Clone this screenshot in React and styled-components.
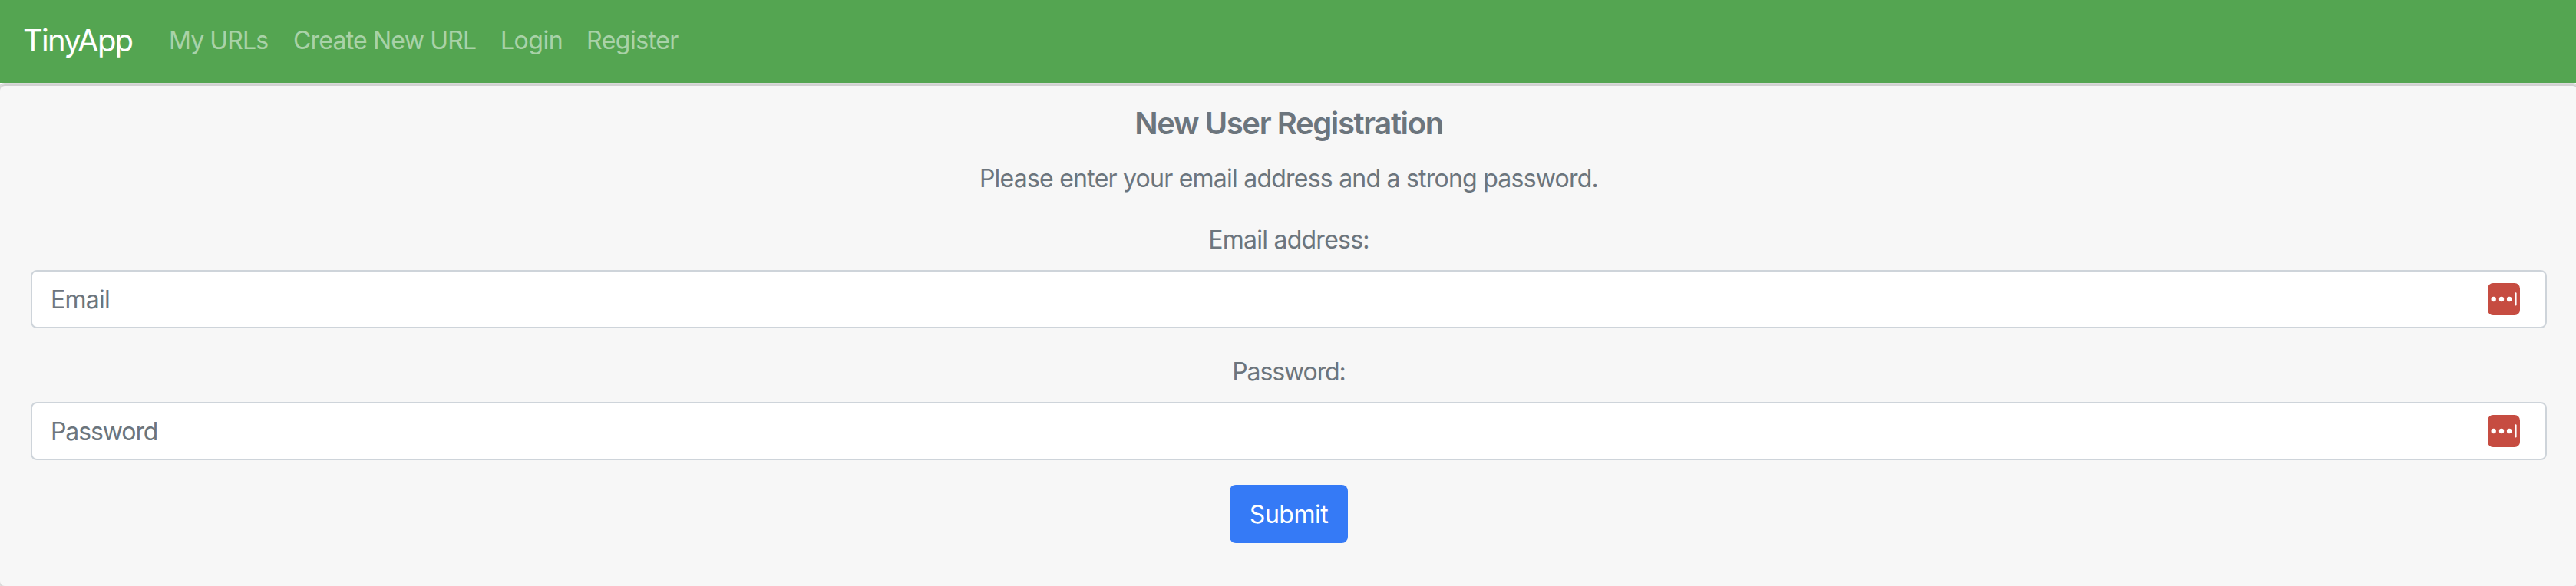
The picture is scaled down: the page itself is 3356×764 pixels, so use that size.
import React from 'react';
import styled, { createGlobalStyle } from 'styled-components';

const GlobalStyle = createGlobalStyle`
  *, *::before, *::after { box-sizing: border-box; }
  body {
    margin: 0;
    background: #fff;
    color: #6c757d;
    font-family: Inter, "Liberation Sans", sans-serif;
    font-size: 32px;
    line-height: 48px;
    overflow: hidden;
  }
`;

const Page = styled.div`
  height: 764px;
  display: flex;
  flex-direction: column;
  overflow: hidden;
`;

const Navbar = styled.nav`
  flex: none;
  height: 108px;
  padding: 0 30px 2px;
  display: flex;
  align-items: center;
  background: #54a551;
  white-space: nowrap;
`;

const Brand = styled.a`
  width: 174px;
  color: #fff;
  font-size: 40px;
  letter-spacing: -1.8px;
`;

const NavLink = styled.a`
  width: ${(p) => p.$width}px;
  padding-left: 16px;
  color: rgba(255, 255, 255, 0.5);
  letter-spacing: ${(p) => p.$tracking}px;
`;

const Card = styled.main`
  flex: 1;
  margin: 0 -4px -2px -2px;
  padding: 25px 40px 0;
  border: 2px solid #dadada;
  border-radius: 8px;
  background: #f7f7f7;
  box-shadow: inset 0 2px 0 #d2d2d2;
  text-align: center;
`;

const Title = styled.h5`
  margin: 2px 0 24px;
  font-size: 40px;
  line-height: 48px;
  font-weight: 600;
  letter-spacing: -1.4px;
`;

const Lead = styled.p`
  margin: 0 0 32px;
  letter-spacing: -0.77px;
`;

const Field = styled.div`
  margin-bottom: 32px;

  & + & {
    margin-top: 33px;
  }
`;

const Label = styled.label`
  display: block;
  margin-bottom: 15px;
  letter-spacing: ${(p) => p.$tracking}px;
`;

const Fields = styled.div`
  display: flex;
  flex-direction: column;

  ${Field} {
    margin-bottom: 0;
  }
`;

const InputBox = styled.div`
  height: 76px;
  display: flex;
  align-items: center;
  padding-right: 33px;
  border: 2px solid #ced4da;
  border-radius: 8px;
  background: #fff;
`;

const Input = styled.input`
  flex: 1;
  height: 72px;
  padding: 1px 24px 0;
  border: 0;
  outline: 0;
  background: transparent;
  font: inherit;
  letter-spacing: ${(p) => p.$tracking}px;
  &::placeholder { color: #6c757d; opacity: 1; }
`;

const Submit = styled.button`
  display: block;
  width: 154px;
  height: 76px;
  margin: 32px auto 0;
  padding: 1px 0 0;
  border: 0;
  border-radius: 8px;
  background: #357af6;
  color: #fff;
  font: inherit;
  letter-spacing: -0.5px;
`;

function PasswordManagerIcon() {
  return (
    <svg width="42" height="42" viewBox="0 0 42 42" aria-hidden="true">
      <rect width="42" height="42" rx="7" fill="#c64c41" />
      <circle cx="7.7" cy="21" r="3.2" fill="#fff" />
      <circle cx="18" cy="21" r="3.2" fill="#fff" />
      <circle cx="28.1" cy="21" r="3.2" fill="#fff" />
      <rect x="35" y="12.3" width="2.6" height="17.2" rx="1.2" fill="#fff" />
    </svg>
  );
}

function FormField({ label, placeholder, type, tracking }) {
  return (
    <Field>
      <Label $tracking={tracking}>{label}</Label>
      <InputBox>
        <Input type={type} placeholder={placeholder} $tracking={tracking} />
        <PasswordManagerIcon />
      </InputBox>
    </Field>
  );
}

export default function App() {
  return (
    <Page>
      <GlobalStyle />
      <Navbar>
        <Brand>TinyApp</Brand>
        <NavLink $width={162} $tracking={-0.9}>My URLs</NavLink>
        <NavLink $width={270} $tracking={-0.8}>Create New URL</NavLink>
        <NavLink $width={112} $tracking={-0.5}>Login</NavLink>
        <NavLink $width={140} $tracking={-0.5}>Register</NavLink>
      </Navbar>
      <Card>
        <Title>New User Registration</Title>
        <Lead>Please enter your email address and a strong password.</Lead>
        <Fields>
          <FormField label="Email address:" placeholder="Email" type="email" tracking={-0.75} />
          <FormField label="Password:" placeholder="Password" type="password" tracking={-1.1} />
        </Fields>
        <Submit type="button">Submit</Submit>
      </Card>
    </Page>
  );
}
